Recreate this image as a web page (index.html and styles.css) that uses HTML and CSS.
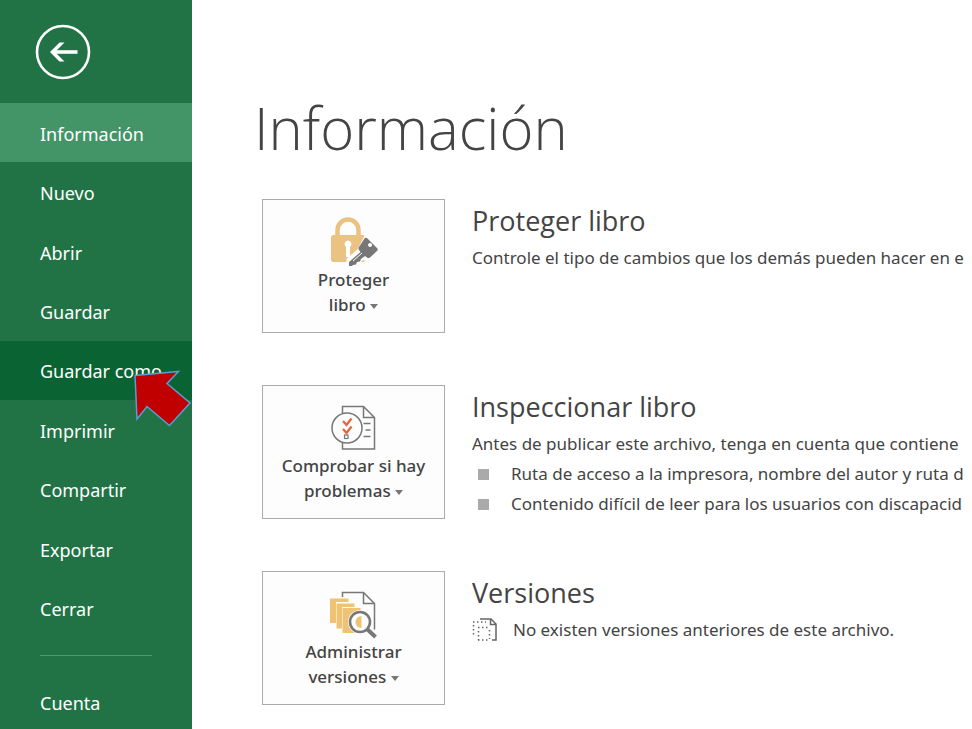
FILE: index.html
```html
<!DOCTYPE html>
<html lang="es">
<head>
<meta charset="utf-8">
<meta name="viewport" content="width=device-width, initial-scale=1">
<title>Información</title>
<link rel="stylesheet" href="styles.css">
</head>
<body>
<div class="backstage">
  <aside class="sidebar">
    <button class="back" type="button" aria-label="Atrás">
      <svg viewBox="0 0 56 56" width="56" height="56" fill="none" stroke="#fff" aria-hidden="true">
        <circle cx="28" cy="28" r="26" stroke-width="2.6"/>
        <path d="M42.500 28H18" stroke-width="3.600"/>
        <path d="M24.500 18.500h5L20 28l9.500 9.500h-5L15 28z" fill="#fff" stroke="none"/>
      </svg>
    </button>
    <nav>
      <ul class="menu">
        <li><a class="item current" href="#informacion">Información</a></li>
        <li><a class="item" href="#nuevo">Nuevo</a></li>
        <li><a class="item" href="#abrir">Abrir</a></li>
        <li><a class="item" href="#guardar">Guardar</a></li>
        <li><a class="item hovered" href="#guardar-como">Guardar como</a>
          <svg class="pointer" viewBox="0 0 58 58" width="58" height="58" aria-hidden="true">
            <path d="M2 6.500L45.500 2.500 34 14.500 57 34 36.500 56.500 14 37.500 4 50z" fill="#c00000" stroke="#5b9bd5" stroke-width="1.500"/>
          </svg>
        </li>
        <li><a class="item" href="#imprimir">Imprimir</a></li>
        <li><a class="item" href="#compartir">Compartir</a></li>
        <li><a class="item" href="#exportar">Exportar</a></li>
        <li><a class="item" href="#cerrar">Cerrar</a></li>
      </ul>
      <hr class="divider">
      <a class="item account" href="#cuenta">Cuenta</a>
    </nav>
  </aside>
  <main class="content" id="informacion">
    <h1>Información</h1>
    <section class="row">
      <button class="tile" type="button">
        <svg viewBox="0 0 50 50" width="50" height="50" aria-hidden="true">
          <path d="M8.500 20v-7a10.500 10.500 0 0 1 21 0v7" fill="none" stroke="#eac282" stroke-width="4.500"/>
          <rect x="2" y="18" width="34" height="27" rx="2.500" fill="#eac282"/>
          <path d="M19 23.500a3.500 3.500 0 0 1 2 6.300V40h-4V29.800a3.500 3.500 0 0 1 2-6.300z" fill="#fff"/>
          <path d="M36 21L49 32.500 38.500 43.500 34 41 24 49.500h-5v-7L30 33z" fill="#fdfdfd" stroke="#fdfdfd" stroke-width="3"/>
          <path d="M35.500 21.500q1.500-1.500 3 0L48 31q1.500 1.500 0 3l-7 6.500q-1.500 1-3 0l-2-1.500-4 3-1 2.500-3 .5-1 2.500-3 .5-1 1h-3v-4l11.500-10-1.500-2q-1-1.500 0-3zM41 26a2 2 0 1 0 .1 0z" fill="#777" fill-rule="evenodd"/>
          <path d="M24 44l9-8" stroke="#fdfdfd" stroke-width="1" fill="none"/>
        </svg>
        <span>Proteger<br>libro <i class="caret"></i></span>
      </button>
      <div class="detail">
        <h2>Proteger libro</h2>
        <p>Controle el tipo de cambios que los demás pueden hacer en e</p>
      </div>
    </section>
    <section class="row">
      <button class="tile" type="button">
        <svg viewBox="0 0 50 50" width="50" height="50" fill="none" stroke="#777" stroke-width="1.500" aria-hidden="true">
          <path d="M13.500 10V3.500h21l11 11v31.500h-32V40M34.500 3.500v11h11M34.500 20.500h7M36.500 27h5M34.500 33.500h7"/>
          <circle cx="18" cy="25" r="15" fill="#fdfdfd"/>
          <path d="M14 18l3.500 4 5-6.500M14 26l3.500 4 5-6.500" stroke="#e8643c" stroke-width="2.300"/>
          <rect x="15.500" y="32" width="3.500" height="3.500" stroke-width="1.200"/>
        </svg>
        <span>Comprobar si hay<br>problemas <i class="caret"></i></span>
      </button>
      <div class="detail">
        <h2>Inspeccionar libro</h2>
        <p>Antes de publicar este archivo, tenga en cuenta que contiene</p>
        <ul class="issues">
          <li>Ruta de acceso a la impresora, nombre del autor y ruta d</li>
          <li>Contenido difícil de leer para los usuarios con discapacid</li>
        </ul>
      </div>
    </section>
    <section class="row">
      <button class="tile" type="button">
        <svg viewBox="0 0 50 50" width="50" height="50" fill="none" aria-hidden="true">
          <path d="M13.500 8V3.500h21l11 11v26M34.500 3.500v11h11" stroke="#777" stroke-width="1.500"/>
          <path d="M1 9.500h18.500v3.500H7v21H1zM7.500 14.500h18v3.500H13v21.500H7.500zM13.500 19h18v25h-18z" fill="#eec474"/>
          <circle cx="31" cy="33" r="12" fill="#fdfdfd"/>
          <path d="M32.500 27v12a6 6 0 0 1 0-12z" fill="#eec474"/>
          <circle cx="31" cy="33" r="10" stroke="#777" stroke-width="2.600"/>
          <path d="M38 40l8.500 8" stroke="#777" stroke-width="4"/>
        </svg>
        <span>Administrar<br>versiones <i class="caret"></i></span>
      </button>
      <div class="detail">
        <h2>Versiones</h2>
        <p class="versions">
          <svg viewBox="0 0 26 26" width="26" height="26" fill="none" stroke="#666" stroke-width="1.500" aria-hidden="true">
            <path d="M8 2h11l5 5v16h-4M18.500 2v5.500H24"/>
            <path d="M1 5h13M1.500 8v11M6 10.500h12M6.500 14v9M6 23h12M17.500 13v9" stroke-dasharray="1.500 2.500"/>
          </svg>
          No existen versiones anteriores de este archivo.
        </p>
      </div>
    </section>
  </main>
</div>
</body>
</html>
```
FILE: styles.css
```css
* {
  box-sizing: border-box;
}

body {
  margin: 0;
  background: #fff;
  color: #444;
  font-family: "Noto Sans", "Open Sans", sans-serif;
  font-size: 17px;
  line-height: 30px;
}

h1, h2, p, ul {
  margin: 0;
  padding: 0;
  font-weight: 400;
}

ul {
  list-style: none;
}

button {
  font: inherit;
  color: inherit;
  cursor: pointer;
}

.backstage {
  display: flex;
  height: 100vh;
  overflow: hidden;
}

.sidebar {
  flex: 0 0 192px;
  background: #217346;
}

.back {
  display: block;
  margin: 24px 0 23px 35px;
  padding: 0;
  border: 0;
  background: none;
}

.back svg {
  display: block;
}

.menu {
  display: grid;
  grid-auto-rows: 1fr;
  height: 535px;
}

.menu li {
  display: grid;
  position: relative;
}

.item {
  display: flex;
  align-items: center;
  padding: 2px 0 0 40px;
  color: #fff;
  font-size: 18px;
  text-decoration: none;
  white-space: nowrap;
}

.current {
  background: #439467;
}

.hovered {
  background: #0a6332;
}

.pointer {
  position: absolute;
  z-index: 1;
  top: 28px;
  left: 133px;
}

.divider {
  width: 112px;
  margin: 17px 0 16px 40px;
  border: 0;
  border-top: 1px solid #4d9a6e;
}

.account {
  height: 60px;
}

.content {
  flex: 1;
  min-width: 0;
  padding: 88px 0 0 70px;
  overflow: hidden;
}

h1 {
  margin: 0 0 31px -8px;
  font-family: "Open Sans", "Noto Sans", sans-serif;
  font-size: 58px;
  font-weight: 300;
  line-height: 80px;
}

.row {
  display: flex;
  gap: 27px;
  margin-bottom: 52px;
}

.tile {
  display: flex;
  flex: 0 0 183px;
  flex-direction: column;
  align-items: center;
  height: 134px;
  padding: 17px 0 0;
  border: 1px solid #ababab;
  background: #fdfdfd;
  font-weight: 500;
  line-height: 25px;
}

.tile svg {
  flex: none;
}

.caret {
  display: inline-block;
  border: 4px solid transparent;
  border-top: 5px solid #777;
  border-bottom: 0;
  vertical-align: middle;
}

.detail {
  flex: 1;
  min-width: 0;
  overflow: hidden;
  white-space: nowrap;
}

h2 {
  margin: 4px 0 4px;
  font-family: "Open Sans", "Noto Sans", sans-serif;
  font-size: 27px;
  line-height: 36px;
}

.issues li {
  display: flex;
  align-items: center;
  gap: 22px;
  padding-left: 6px;
}

.issues li::before {
  flex: none;
  width: 11px;
  height: 11px;
  background: #aaa;
  content: "";
}

.versions {
  display: flex;
  align-items: center;
  gap: 15px;
}
```
